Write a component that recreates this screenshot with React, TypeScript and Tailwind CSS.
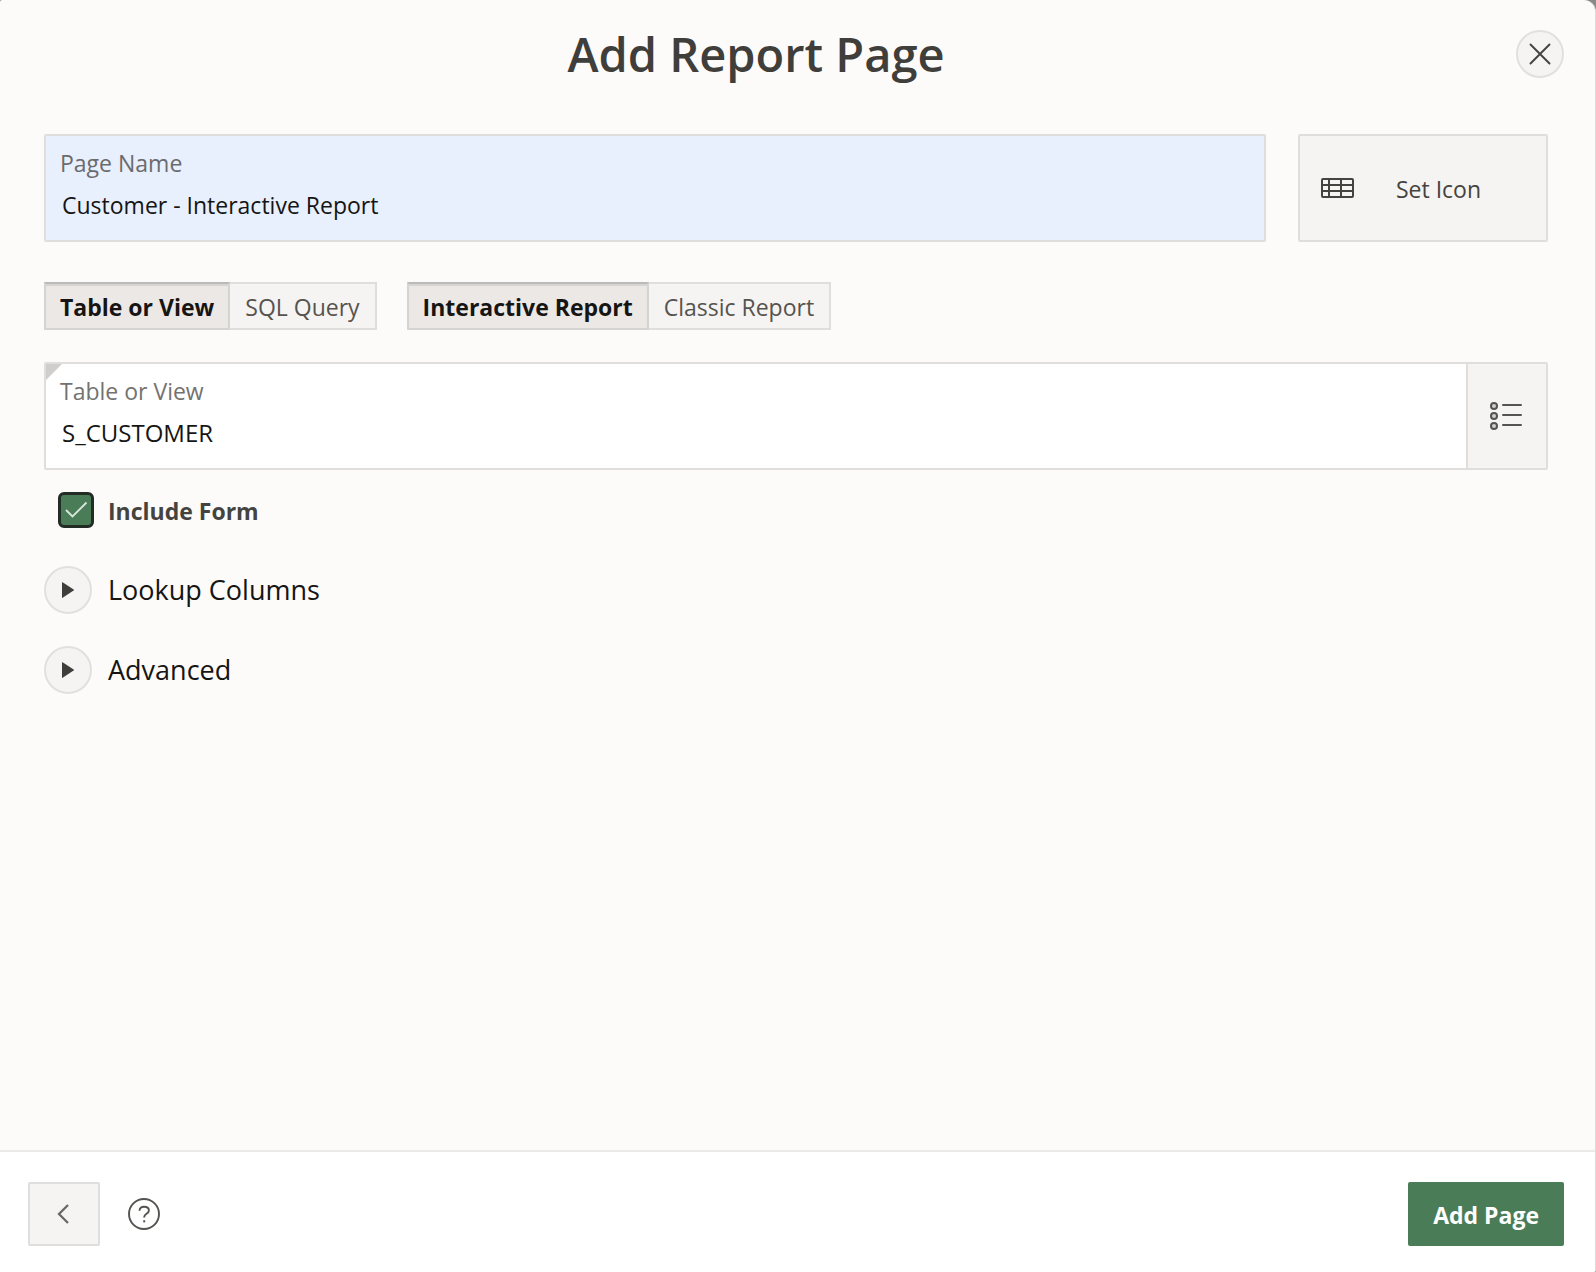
import { useState } from "react";

function CloseIcon() {
  return (
    <svg width="24" height="24" viewBox="0 0 24 24" fill="none" stroke="currentColor" strokeWidth="1.9" strokeLinecap="round" aria-hidden="true">
      <path d="M2.500 2.500l19 19M21.500 2.500l-19 19" />
    </svg>
  );
}

function TableIcon() {
  return (
    <svg width="34" height="20" viewBox="0 0 34 20" fill="none" stroke="currentColor" strokeWidth="2" aria-hidden="true">
      <rect x="1" y="1" width="31" height="18" rx="1" />
      <path d="M1 7h31M1 13h31M8 1v18M20 1v18" />
    </svg>
  );
}

function ListIcon() {
  return (
    <svg width="32" height="28" viewBox="0 0 32 28" fill="none" stroke="currentColor" strokeWidth="2" aria-hidden="true">
      <circle cx="4" cy="4" r="3" fill="#d0cfcd" />
      <circle cx="4" cy="14" r="3" fill="#d0cfcd" />
      <circle cx="4" cy="24" r="3" fill="#d0cfcd" />
      <path d="M13 3h18M13 13h18M13 23h18" strokeLinecap="round" />
    </svg>
  );
}

type SegmentProps = { label: string; name: string; options: string[]; value: string; onChange: (v: string) => void };

function Segmented({ label, name, options, value, onChange }: SegmentProps) {
  return (
    <div role="radiogroup" aria-label={label} className="flex">
      {options.map((option, i) => (
        <label
          key={option}
          className={
            (i > 0 ? "border-l-0 " : "") +
            "relative flex h-12 cursor-pointer items-center border-2 pt-0.5 " +
            (value === option
              ? "border-[#d6d4d1] border-t-[#bcbab8] bg-[#ece8e5] px-3.5 font-bold text-[#161513] shadow-[inset_0_2px_1px_#d6d3d0]"
              : "border-[#dfdedc] bg-[#f5f4f2] px-[15px] text-[#55534f]")
          }
        >
          <input
            type="radio"
            name={name}
            className="absolute inset-0 size-full cursor-pointer appearance-none"
            checked={value === option}
            onChange={() => onChange(option)}
          />
          {option}
        </label>
      ))}
    </div>
  );
}

function Disclosure({ title }: { title: string }) {
  const [open, setOpen] = useState(false);
  return (
    <h2 className="flex items-center gap-4 text-[27px] leading-9 text-[#161513]">
      <button
        type="button"
        aria-label={title}
        aria-expanded={open}
        onClick={() => setOpen(!open)}
        className="flex size-12 items-center justify-center rounded-full border-2 border-[#e2e0de] bg-[#f5f4f2] text-[#403e3a]"
      >
        <svg width="12" height="16" viewBox="0 0 12 16" fill="currentColor" aria-hidden="true">
          <path d="M0 0.500v15q0 .6.600.3L11.600 8.500q.5-.5 0-1L.6.200Q0-.1 0 .5z" />
        </svg>
      </button>
      {title}
    </h2>
  );
}

export default function App() {
  const [pageName, setPageName] = useState("Customer - Interactive Report");
  const [table, setTable] = useState("S_CUSTOMER");
  const [source, setSource] = useState("Table or View");
  const [kind, setKind] = useState("Interactive Report");
  const [includeForm, setIncludeForm] = useState(true);

  return (
    <div className="bg-[#8a8988] font-['Open_Sans',sans-serif] text-[23px] leading-8">
      <div role="dialog" aria-labelledby="dialog-title" className="flex min-h-screen flex-col overflow-hidden rounded-tl-xs rounded-tr-xl rounded-br-xs border-r border-[#dddcda] bg-[#fcfbf9]">
        <header className="flex items-center gap-1 pt-[30px] pr-[31px]">
          <h1 id="dialog-title" className="flex-1 text-center text-[47px] leading-12 font-semibold text-[#403e3a]">
            Add Report Page
          </h1>
          <button type="button" aria-label="Close" className="flex size-12 items-center justify-center rounded-full border-2 border-[#e2e0de] bg-[#f5f4f2] text-[#45433f]">
            <CloseIcon />
          </button>
        </header>

        <main className="flex flex-1 flex-col pt-14 pr-[47px] pl-11">
          <div className="flex gap-8">
            <div className="flex h-27 flex-1 flex-col rounded-xs border-2 border-[#dfdedc] bg-[#e8effd] px-3.5 pt-[11px]">
              <label htmlFor="page-name" className="text-[#6b6b6d]">Page Name</label>
              <input
                id="page-name"
                value={pageName}
                onChange={(e) => setPageName(e.target.value)}
                className="mt-2.5 h-8 w-full bg-transparent pl-0.5 text-[#161513] outline-none"
              />
            </div>
            <button type="button" className="flex h-27 w-[250px] items-center rounded-xs border-2 border-[#dfdedc] bg-[#f5f4f2] pl-[21px] text-[#45433f]">
              <TableIcon />
              <span className="flex-1 pt-0.5 pr-6 text-center">Set Icon</span>
            </button>
          </div>

          <div className="mt-10 flex gap-[30px]">
            <Segmented label="Data source" name="source" options={["Table or View", "SQL Query"]} value={source} onChange={setSource} />
            <Segmented label="Report type" name="kind" options={["Interactive Report", "Classic Report"]} value={kind} onChange={setKind} />
          </div>

          <div className="relative mt-8 flex h-27 rounded-xs border-2 border-[#dfdedc] bg-white">
            <svg className="absolute top-0 left-0" width="16" height="16" viewBox="0 0 16 16" fill="#cfcecd" aria-hidden="true">
              <path d="M0 0h16L0 16z" />
            </svg>
            <div className="flex flex-1 flex-col px-3.5 pt-[11px]">
              <label htmlFor="table-or-view" className="text-[#747270]">Table or View</label>
              <input
                id="table-or-view"
                value={table}
                onChange={(e) => setTable(e.target.value)}
                className="mt-2.5 h-8 w-full bg-transparent pl-0.5 text-2xl text-[#161513] outline-none"
              />
            </div>
            <button type="button" aria-label="Select table or view" className="flex w-20 items-center justify-center border-l-2 border-[#dfdedc] bg-[#f5f4f2] pr-0.5 text-[#55524f]">
              <ListIcon />
            </button>
          </div>

          <label className="mt-[22px] flex items-center gap-3.5 self-start pl-3.5 font-bold text-[#45433f]">
            <span className="relative size-9">
              <input
                type="checkbox"
                checked={includeForm}
                onChange={(e) => setIncludeForm(e.target.checked)}
                className="block size-9 appearance-none rounded-md border-3 border-[#232b25] bg-white checked:bg-[#4a7d57]"
              />
              {includeForm && (
                <svg className="pointer-events-none absolute inset-0" width="36" height="36" viewBox="0 0 36 36" fill="none" stroke="#d9e6dc" strokeWidth="1.8" aria-hidden="true">
                  <path d="M8 18l6.500 6.500L28.500 10.500" />
                </svg>
              )}
            </span>
            <span className="pt-0.5">Include Form</span>
          </label>

          <div className="mt-[38px] flex flex-col gap-8">
            <Disclosure title="Lookup Columns" />
            <Disclosure title="Advanced" />
          </div>
        </main>

        <footer className="flex items-center border-t-2 border-[#ebeae8] bg-white pt-[30px] pr-[31px] pb-[26px] pl-7">
          <button type="button" aria-label="Back" className="flex h-16 w-18 items-center justify-center rounded-xs border-2 border-[#dfdedc] bg-[#f5f4f2] pr-0.5 text-[#6a6865]">
            <svg width="12" height="20" viewBox="0 0 12 20" fill="none" stroke="currentColor" strokeWidth="2.300" aria-hidden="true">
              <path d="M11 1L2 10l9 9" />
            </svg>
          </button>
          <button type="button" aria-label="Help" className="ml-7 text-[#55534f]">
            <svg width="32" height="32" viewBox="0 0 32 32" fill="none" stroke="currentColor" strokeWidth="1.900" aria-hidden="true">
              <circle cx="16" cy="16" r="15" />
              <path d="M11.500 12.700c0-2.500 1.900-4 4.600-4s4.800 1.400 4.800 3.700c0 3.400-4.700 3.300-4.700 6.600v.6" />
              <path d="M16.200 22.200v2.200" />
            </svg>
          </button>
          <button type="button" className="ml-auto h-16 rounded-xs bg-[#4a7d57] px-[25px] pt-0.5 font-bold text-white">Add Page</button>
        </footer>
      </div>
    </div>
  );
}
